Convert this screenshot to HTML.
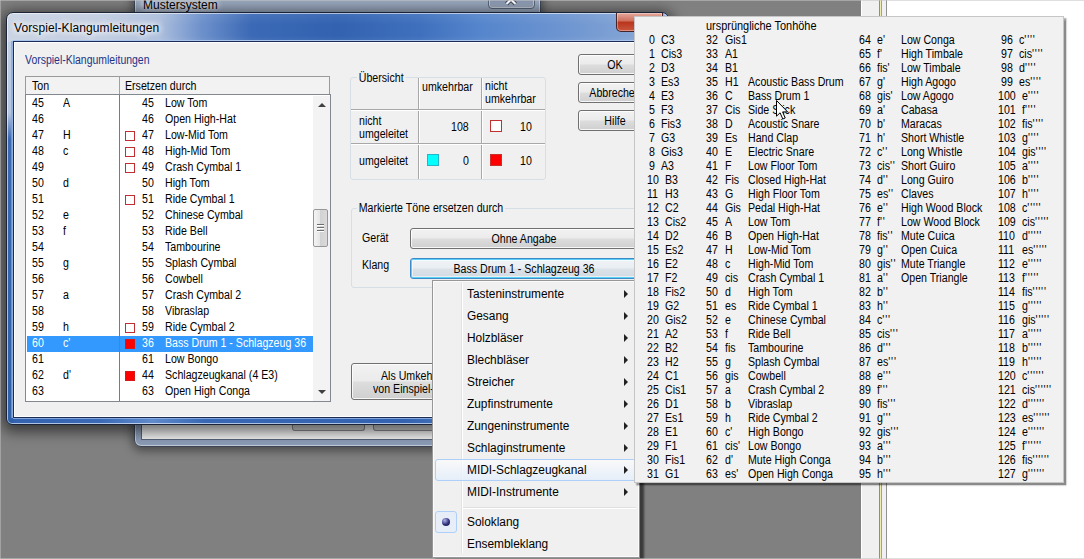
<!DOCTYPE html>
<html lang="de"><head><meta charset="utf-8"><title>Vorspiel-Klangumleitungen</title>
<style>
*{box-sizing:border-box;margin:0;padding:0}
html,body{width:1084px;height:559px;overflow:hidden}
body{background:#808080;font-family:"Liberation Sans",sans-serif;font-size:12px;color:#000;position:relative}
.abs{position:absolute}
i{font-style:normal;display:block;position:absolute}
/* ---------- background ---------- */
#topline{left:0;top:0;width:1084px;height:1px;background:rgba(196,196,196,.55)}
#botline{left:0;top:558px;width:1084px;height:1px;background:rgba(196,196,196,.55)}
#leftline{left:0;top:0;width:1px;height:559px;background:rgba(196,196,196,.5)}
#rwin{left:861px;top:0;width:223px;height:559px;background:#fff}
#rwin .a{left:0;top:0;width:18px;height:559px;background:#f0f0f0;border-left:1px solid #fff}
#rwin .b{left:18px;top:0;width:4px;height:559px;background:linear-gradient(90deg,#90907a 1px,#efefb2 1px,#eeeeb0 2.5px,#a4a486 2.5px,#a4a486 3.5px,#f0f0f4 3.5px)}
#rwin .c{left:22px;top:0;width:3px;height:559px;background:#f0f0f4}
#rwin .d{left:25px;top:0;width:1px;height:559px;background:#929292}
/* behind window */
#bwin{left:134px;top:-20px;width:407px;height:467px;border-radius:7px;border:1px solid #3c4656;
 background:linear-gradient(#9aa9bf,#8c9cb5);box-shadow:0 2px 10px 2px rgba(0,0,0,.42), inset 0 0 0 1px rgba(255,255,255,.45)}
#bwin .cl{left:6px;top:48px;width:393px;height:411px;background:#f0f0f0;border:1px solid #56627a}
#bwin .tt{left:8px;top:17px;font-size:12px;white-space:pre;text-shadow:0 0 6px #fff,0 0 6px #fff}
#bwin .xb{left:353px;top:10px;width:47px;height:18px;border:1px solid #5a6578;border-radius:0 0 4px 4px;background:linear-gradient(#b4bfd0,#98a6bc 50%,#8695ae 50%,#a0adc2);box-shadow:inset 0 0 0 1px rgba(255,255,255,.4)}
#bwin .bb{top:436px;height:14px;border:1px solid #8a8a8a;border-top:none;border-radius:0 0 3px 3px;background:linear-gradient(#dcdcdc,#cfcfcf)}
/* dialog */
#dlg{left:6px;top:12px;width:663px;height:413px;border-radius:7px 7px 6px 6px;border:1px solid #1a2436;
 background:
  linear-gradient(90deg,#c9d3e3 0,#c2cde1 14%,#adbfdd 23%,#6c90cb 29.5%,#3b69b5 37%,#3262b0 50%,#3f70bd 62.5%,#5585cc 71.5%,#6c94d0 83.5%,#86a6d6 96%,#8aa8d8 100%) 0 0/100% 29px no-repeat,
  linear-gradient(180deg,#c4cfe2 0,#b6c6df 100px,#3b69b4 126px,#2f5fa9 100%) 0 0/7px 100% no-repeat,
  linear-gradient(90deg,#3363b0 0,#3a6ab6 14%,#5f8acb 22%,#3868b4 30%,#3363b0 60%,#5a86c8 76%,#3a6ab6 88%,#3363b0 100%);
 box-shadow:0 3px 14px 4px rgba(0,0,0,.55), inset 0 0 0 1px rgba(255,255,255,.6)}
#dlg .sh{left:1px;top:1px;right:1px;height:27px;border-radius:6px 6px 0 0;background:linear-gradient(rgba(255,255,255,.07),rgba(255,255,255,0) 40%,rgba(255,255,255,0) 80%,rgba(255,255,255,.06))}
#dlg .ttl{left:7px;top:7px;letter-spacing:.1px;font-size:12px;line-height:16px;white-space:pre;text-shadow:0 0 7px #fff,0 0 7px #fff,0 0 9px #fff}
#dlg .close{left:609px;top:0px;width:47px;height:19px;border:1px solid #46242a;border-top:none;border-radius:0 0 5px 5px;background:linear-gradient(#e3a99d,#cf6d5a 45%,#b9341c 50%,#c9563c 100%);box-shadow:inset 0 0 0 1px rgba(255,255,255,.35)}
#cl{left:6px;top:28px;width:650px;height:377px;background:#f0f0f0;border:1px solid #1c2c52;box-shadow:inset 0 0 0 1px #fff,0 -1px 0 0 #a9c5ef,-1px 0 0 0 rgba(150,180,225,.8),-2px 0 0 0 rgba(130,165,215,.7),0 1px 0 0 rgba(150,185,235,.8)}
/* dialog text */
.dt{position:absolute;white-space:pre;font-size:12px;line-height:16px;transform:scaleX(.885);transform-origin:0 50%}
.dtc{position:absolute;white-space:pre;font-size:12px;line-height:14px;transform:scaleX(.885);transform-origin:50% 50%;text-align:center}
/* list */
#hdr{left:25px;top:76px;width:305px;height:18px;background:#f2f2f2;border:1px solid #9a9a9a;border-bottom:none}
#hdr .v{left:93px;top:0;width:1px;height:17px;background:#a0a0a0}
#list{left:25px;top:94px;width:306px;height:308px;background:#fff;border:1px solid #828790}
#list .div{left:93px;top:0;width:1px;height:306px;background:#5c7fb5}
.lr{position:absolute;left:1px;width:286px;height:16px}
.lr.sel{background:#3399ff;color:#fff}
.lr .c1{left:4.9px;top:-1.5px}.lr .c2{left:36.4px;top:-1.5px}.lr .c3{left:114.7px;top:-1.5px}.lr .c4{left:137.8px;top:-1.5px}
.sq{left:98px;top:3px;width:10px;height:10px}
.sq.e{border:1px solid #c03030;background:#fff}
.sq.f{border:1px solid #d81818;background:#ff0000}
#sb{left:287px;top:1px;width:17px;height:305px;background:#f3f3f3}
#sb .th{left:0px;top:113px;width:15px;height:38px;border:1px solid #979797;border-radius:2px;background:linear-gradient(90deg,#f4f4f4,#e4e4e4 50%,#d2d2d2 50%,#dadada)}
#sb .gr{left:4px;width:7px;height:2px;background:linear-gradient(#6e6e6e 1px,#fff 1px)}
.tri-u{width:0;height:0;border-left:4px solid transparent;border-right:4px solid transparent;border-bottom:4px solid #404040}
.tri-d{width:0;height:0;border-left:4px solid transparent;border-right:4px solid transparent;border-top:4px solid #404040}
/* group boxes */
.gb{position:absolute;border:1px solid #d5dfe5;border-radius:3px}
.gbl{position:absolute;background:#f0f0f0;padding:0 2px}
.eh{position:absolute;height:2px;border-top:1px solid #a8a8a8;border-bottom:1px solid #fff}
.ev{position:absolute;width:2px;border-left:1px solid #a8a8a8;border-right:1px solid #fff}
.csq{position:absolute;width:12px;height:12px}
/* buttons */
.btn{position:absolute;border:1px solid #707070;border-radius:3px;background:linear-gradient(#f2f2f2,#ebebeb 48%,#dddddd 52%,#cfcfcf);box-shadow:inset 0 0 0 1px rgba(255,255,255,.8)}
.btn.hot{border-color:#3c8ac8;background:linear-gradient(#f0f4f7,#e9eef2 48%,#dbe2e8 52%,#d2dae2);box-shadow:inset 0 0 0 1px #5ad2f6, inset 0 0 0 2px rgba(255,255,255,.55)}
/* menu */
#menu{left:432px;top:280px;width:208px;height:278px;background:#f0f0f0;border:1px solid #979797;border-right-color:#8a8a8a;box-shadow:inset 0 0 0 1px #fbfbfb,3px 3px 2px .5px rgba(0,0,0,.55)}
#menu .gut{left:28px;top:2px;width:2px;height:270px;border-left:1px solid #e2e3e3;border-right:1px solid #fff}
.mi{position:absolute;left:2px;width:202px;height:22px}
.mi.hl{margin-top:-1px;border:1px solid #aecff7;border-radius:3px;background:linear-gradient(rgba(255,255,255,.6),rgba(228,238,250,.9))}
.mt{position:absolute;left:32.4px;top:0;line-height:21px;font-size:12px;white-space:pre;transform:scaleX(.99);transform-origin:0 50%}
.mi.hl .mt{left:31.4px;top:0}
.arr{right:9px;top:6px;width:0;height:0;border-top:4px solid transparent;border-bottom:4px solid transparent;border-left:4px solid #222}
.mi.hl .arr{right:8px;top:6px}
.msep{position:absolute;left:30px;width:173px;height:2px;border-top:1px solid #e0e0e0;border-bottom:1px solid #fff}
.rb{left:0px;top:-1px;width:22px;height:22px;border:1px solid #aecff7;border-radius:3px;background:#e8eef8}
.rb b{display:block;position:absolute;left:6px;top:6px;width:8px;height:8px;border-radius:50%;background:radial-gradient(circle at 35% 30%,#b0b4e8,#30307a 55%,#10104a)}
/* popup */
#pop{left:634px;top:16px;width:430px;height:467px;background:#f1f1f1;border:1px solid #c6c6c6;box-shadow:2px 2px 1.5px .5px rgba(0,0,0,.46)}
.pt{position:absolute;white-space:pre;font-size:12px;line-height:14px;transform:scaleX(.885);transform-origin:0 50%}
.ap{letter-spacing:.9px}
</style></head><body>
<div id="rwin" class="abs"><i class="a"></i><i class="b"></i><i class="c"></i><i class="d"></i></div>
<div id="bwin" class="abs"><div class="cl abs"></div><span class="tt abs">Mustersystem</span><i class="xb"></i><svg class="abs" style="left:369px;top:13px" width="14" height="12" viewBox="0 0 14 12"><path d="M2.5 1 L11.5 10 M11.5 1 L2.5 10" stroke="#3a4456" stroke-width="4" fill="none"/><path d="M2.5 1 L11.5 10 M11.5 1 L2.5 10" stroke="#fff" stroke-width="2.2" fill="none"/></svg>
<i class="bb" style="left:157px;width:73px"></i><i class="bb" style="left:238px;width:120px"></i></div>

<div id="dlg" class="abs"><i class="sh"></i><span class="ttl abs">Vorspiel-Klangumleitungen</span><i class="close"></i>
<div id="cl" class="abs"></div></div>

<!-- dialog contents (page coords) -->
<span class="dt" style="left:24.5px;top:52px;color:#1e3287;transform:scaleX(.872)">Vorspiel-Klangumleitungen</span>
<div id="hdr" class="abs"><i class="v"></i><span class="dt" style="left:6px;top:1px">Ton</span><span class="dt" style="left:99px;top:1px">Ersetzen durch</span></div>
<div id="list" class="abs">
<div class="lr" style="top:1px"><span class="dt c1">45</span><span class="dt c2">A</span><span class="dt c3">45</span><span class="dt c4">Low Tom</span></div>
<div class="lr" style="top:17px"><span class="dt c1">46</span><span class="dt c2"></span><span class="dt c3">46</span><span class="dt c4">Open High-Hat</span></div>
<div class="lr" style="top:33px"><span class="dt c1">47</span><span class="dt c2">H</span><i class="sq e"></i><span class="dt c3">47</span><span class="dt c4">Low-Mid Tom</span></div>
<div class="lr" style="top:49px"><span class="dt c1">48</span><span class="dt c2">c</span><i class="sq e"></i><span class="dt c3">48</span><span class="dt c4">High-Mid Tom</span></div>
<div class="lr" style="top:65px"><span class="dt c1">49</span><span class="dt c2"></span><i class="sq e"></i><span class="dt c3">49</span><span class="dt c4">Crash Cymbal 1</span></div>
<div class="lr" style="top:81px"><span class="dt c1">50</span><span class="dt c2">d</span><span class="dt c3">50</span><span class="dt c4">High Tom</span></div>
<div class="lr" style="top:97px"><span class="dt c1">51</span><span class="dt c2"></span><i class="sq e"></i><span class="dt c3">51</span><span class="dt c4">Ride Cymbal 1</span></div>
<div class="lr" style="top:113px"><span class="dt c1">52</span><span class="dt c2">e</span><span class="dt c3">52</span><span class="dt c4">Chinese Cymbal</span></div>
<div class="lr" style="top:129px"><span class="dt c1">53</span><span class="dt c2">f</span><span class="dt c3">53</span><span class="dt c4">Ride Bell</span></div>
<div class="lr" style="top:145px"><span class="dt c1">54</span><span class="dt c2"></span><span class="dt c3">54</span><span class="dt c4">Tambourine</span></div>
<div class="lr" style="top:161px"><span class="dt c1">55</span><span class="dt c2">g</span><span class="dt c3">55</span><span class="dt c4">Splash Cymbal</span></div>
<div class="lr" style="top:177px"><span class="dt c1">56</span><span class="dt c2"></span><span class="dt c3">56</span><span class="dt c4">Cowbell</span></div>
<div class="lr" style="top:193px"><span class="dt c1">57</span><span class="dt c2">a</span><span class="dt c3">57</span><span class="dt c4">Crash Cymbal 2</span></div>
<div class="lr" style="top:209px"><span class="dt c1">58</span><span class="dt c2"></span><span class="dt c3">58</span><span class="dt c4">Vibraslap</span></div>
<div class="lr" style="top:225px"><span class="dt c1">59</span><span class="dt c2">h</span><i class="sq e"></i><span class="dt c3">59</span><span class="dt c4">Ride Cymbal 2</span></div>
<div class="lr sel" style="top:241px"><span class="dt c1">60</span><span class="dt c2">c'</span><i class="sq f"></i><span class="dt c3">36</span><span class="dt c4">Bass Drum 1 - Schlagzeug 36</span></div>
<div class="lr" style="top:257px"><span class="dt c1">61</span><span class="dt c2"></span><span class="dt c3">61</span><span class="dt c4">Low Bongo</span></div>
<div class="lr" style="top:273px"><span class="dt c1">62</span><span class="dt c2">d'</span><i class="sq f"></i><span class="dt c3">44</span><span class="dt c4">Schlagzeugkanal (4 E3)</span></div>
<div class="lr" style="top:289px"><span class="dt c1">63</span><span class="dt c2"></span><span class="dt c3">63</span><span class="dt c4">Open High Conga</span></div>
<i class="div"></i>
<div id="sb" class="abs"><i class="tri-u" style="left:5px;top:7px"></i><i class="th"></i><i class="gr" style="top:128px"></i><i class="gr" style="top:131px"></i><i class="gr" style="top:134px"></i><i class="tri-d" style="left:5px;top:294px"></i></div>
</div>

<!-- Übersicht -->
<div class="gb" style="left:350px;top:77px;width:196px;height:103px"></div>
<span class="gbl dt" style="left:357px;top:69.5px">Übersicht</span>
<i class="ev" style="left:418px;top:78px;height:101px"></i>
<i class="ev" style="left:481px;top:78px;height:101px"></i>
<i class="eh" style="left:351px;top:109px;width:194px"></i>
<i class="eh" style="left:351px;top:143px;width:194px"></i>
<span class="dt" style="left:422px;top:78.5px">umkehrbar</span>
<span class="dt" style="left:485px;top:80px;line-height:13px">nicht
umkehrbar</span>
<span class="dt" style="left:359px;top:115px;line-height:13px">nicht
umgeleitet</span>
<span class="dt" style="left:359px;top:153px">umgeleitet</span>
<span class="dt" style="left:451px;top:118.7px">108</span>
<span class="dt" style="left:520px;top:118.7px">10</span>
<span class="dt" style="left:463px;top:153px">0</span>
<span class="dt" style="left:520px;top:153px">10</span>
<i class="csq" style="left:490px;top:120px;border:1px solid #c03030;background:#fff"></i>
<i class="csq" style="left:427px;top:154px;border:1px solid #28b4c4;background:#00ffff"></i>
<i class="csq" style="left:490px;top:154px;border:1px solid #c83030;background:#ff0000"></i>

<!-- Markierte Töne -->
<div class="gb" style="left:351px;top:208px;width:320px;height:80px"></div>
<span class="gbl dt" style="left:357px;top:200px">Markierte Töne ersetzen durch</span>
<span class="dt" style="left:361.5px;top:230px">Gerät</span>
<span class="dt" style="left:361.5px;top:257px">Klang</span>
<div class="btn" style="left:410px;top:228px;width:228px;height:21px"><span class="dtc" style="left:0;top:3px;width:226px">Ohne Angabe</span></div>
<div class="btn hot" style="left:410px;top:258px;width:228px;height:21px"><span class="dtc" style="left:0;top:3px;width:226px">Bass Drum 1 - Schlagzeug 36</span></div>
<div class="btn" style="left:351px;top:363px;width:150px;height:37px"><span class="dt" style="left:28.5px;top:4px">Als Umkeh</span><span class="dt" style="left:20.5px;top:17px">von Einspiel-</span></div>
<div class="btn" style="left:578px;top:54px;width:74px;height:21px"><span class="dtc" style="left:0;top:3px;width:72px">OK</span></div>
<div class="btn" style="left:578px;top:82px;width:74px;height:21px"><span class="dtc" style="left:0;top:3px;width:72px">Abbrechen</span></div>
<div class="btn" style="left:578px;top:110px;width:74px;height:21px"><span class="dtc" style="left:0;top:3px;width:72px">Hilfe</span></div>

<div id="menu" class="abs"><i class="gut"></i>
<div class="mi" style="top:3px"><span class="mt">Tasteninstrumente</span><i class="arr"></i></div>
<div class="mi" style="top:25px"><span class="mt">Gesang</span><i class="arr"></i></div>
<div class="mi" style="top:47px"><span class="mt">Holzbläser</span><i class="arr"></i></div>
<div class="mi" style="top:69px"><span class="mt">Blechbläser</span><i class="arr"></i></div>
<div class="mi" style="top:91px"><span class="mt">Streicher</span><i class="arr"></i></div>
<div class="mi" style="top:113px"><span class="mt">Zupfinstrumente</span><i class="arr"></i></div>
<div class="mi" style="top:135px"><span class="mt">Zungeninstrumente</span><i class="arr"></i></div>
<div class="mi" style="top:157px"><span class="mt">Schlaginstrumente</span><i class="arr"></i></div>
<div class="mi hl" style="top:179px"><span class="mt">MIDI-Schlagzeugkanal</span><i class="arr"></i></div>
<div class="mi" style="top:201px"><span class="mt">MIDI-Instrumente</span><i class="arr"></i></div>
<div class="msep" style="top:226px"></div>
<div class="mi" style="top:231px"><i class="rb"><b></b></i><span class="mt">Soloklang</span></div>
<div class="mi" style="top:253px"><span class="mt">Ensembleklang</span></div>
</div>

<div id="pop" class="abs">
<span class="pt" style="transform:scaleX(.912);left:70.8px;top:2px">ursprüngliche Tonhöhe</span>
<span class="pt" style="left:13.9px;top:16px">0</span>
<span class="pt" style="left:26.3px;top:16px">C3</span>
<span class="pt" style="left:71.3px;top:16px">32</span>
<span class="pt" style="left:89.5px;top:16px">Gis1</span>
<span class="pt" style="left:224.3px;top:16px">64</span>
<span class="pt" style="left:241.6px;top:16px">e'</span>
<span class="pt" style="left:266.4px;top:16px">Low Conga</span>
<span class="pt" style="left:366.3px;top:16px">96</span>
<span class="pt" style="left:384.2px;top:16px">c<span class="ap">''''</span></span>
<span class="pt" style="left:13.9px;top:30px">1</span>
<span class="pt" style="left:26.3px;top:30px">Cis3</span>
<span class="pt" style="left:71.3px;top:30px">33</span>
<span class="pt" style="left:89.5px;top:30px">A1</span>
<span class="pt" style="left:224.3px;top:30px">65</span>
<span class="pt" style="left:241.6px;top:30px">f'</span>
<span class="pt" style="left:266.4px;top:30px">High Timbale</span>
<span class="pt" style="left:366.3px;top:30px">97</span>
<span class="pt" style="left:384.2px;top:30px">cis<span class="ap">''''</span></span>
<span class="pt" style="left:13.9px;top:44px">2</span>
<span class="pt" style="left:26.3px;top:44px">D3</span>
<span class="pt" style="left:71.3px;top:44px">34</span>
<span class="pt" style="left:89.5px;top:44px">B1</span>
<span class="pt" style="left:224.3px;top:44px">66</span>
<span class="pt" style="left:241.6px;top:44px">fis'</span>
<span class="pt" style="left:266.4px;top:44px">Low Timbale</span>
<span class="pt" style="left:366.3px;top:44px">98</span>
<span class="pt" style="left:384.2px;top:44px">d<span class="ap">''''</span></span>
<span class="pt" style="left:13.9px;top:58px">3</span>
<span class="pt" style="left:26.3px;top:58px">Es3</span>
<span class="pt" style="left:71.3px;top:58px">35</span>
<span class="pt" style="left:89.5px;top:58px">H1</span>
<span class="pt" style="left:113.4px;top:58px">Acoustic Bass Drum</span>
<span class="pt" style="left:224.3px;top:58px">67</span>
<span class="pt" style="left:241.6px;top:58px">g'</span>
<span class="pt" style="left:266.4px;top:58px">High Agogo</span>
<span class="pt" style="left:366.3px;top:58px">99</span>
<span class="pt" style="left:384.2px;top:58px">es<span class="ap">''''</span></span>
<span class="pt" style="left:13.9px;top:72px">4</span>
<span class="pt" style="left:26.3px;top:72px">E3</span>
<span class="pt" style="left:71.3px;top:72px">36</span>
<span class="pt" style="left:89.5px;top:72px">C</span>
<span class="pt" style="left:113.4px;top:72px">Bass Drum 1</span>
<span class="pt" style="left:224.3px;top:72px">68</span>
<span class="pt" style="left:241.6px;top:72px">gis'</span>
<span class="pt" style="left:266.4px;top:72px">Low Agogo</span>
<span class="pt" style="left:363.4px;top:72px">100</span>
<span class="pt" style="left:386.8px;top:72px">e<span class="ap">''''</span></span>
<span class="pt" style="left:13.9px;top:86px">5</span>
<span class="pt" style="left:26.3px;top:86px">F3</span>
<span class="pt" style="left:71.3px;top:86px">37</span>
<span class="pt" style="left:89.5px;top:86px">Cis</span>
<span class="pt" style="left:113.4px;top:86px">Side Stick</span>
<span class="pt" style="left:224.3px;top:86px">69</span>
<span class="pt" style="left:241.6px;top:86px">a'</span>
<span class="pt" style="left:266.4px;top:86px">Cabasa</span>
<span class="pt" style="left:363.4px;top:86px">101</span>
<span class="pt" style="left:386.8px;top:86px">f<span class="ap">''''</span></span>
<span class="pt" style="left:13.9px;top:100px">6</span>
<span class="pt" style="left:26.3px;top:100px">Fis3</span>
<span class="pt" style="left:71.3px;top:100px">38</span>
<span class="pt" style="left:89.5px;top:100px">D</span>
<span class="pt" style="left:113.4px;top:100px">Acoustic Snare</span>
<span class="pt" style="left:224.3px;top:100px">70</span>
<span class="pt" style="left:241.6px;top:100px">b'</span>
<span class="pt" style="left:266.4px;top:100px">Maracas</span>
<span class="pt" style="left:363.4px;top:100px">102</span>
<span class="pt" style="left:386.8px;top:100px">fis<span class="ap">''''</span></span>
<span class="pt" style="left:13.9px;top:114px">7</span>
<span class="pt" style="left:26.3px;top:114px">G3</span>
<span class="pt" style="left:71.3px;top:114px">39</span>
<span class="pt" style="left:89.5px;top:114px">Es</span>
<span class="pt" style="left:113.4px;top:114px">Hand Clap</span>
<span class="pt" style="left:224.3px;top:114px">71</span>
<span class="pt" style="left:241.6px;top:114px">h'</span>
<span class="pt" style="left:266.4px;top:114px">Short Whistle</span>
<span class="pt" style="left:363.4px;top:114px">103</span>
<span class="pt" style="left:386.8px;top:114px">g<span class="ap">''''</span></span>
<span class="pt" style="left:13.9px;top:128px">8</span>
<span class="pt" style="left:26.3px;top:128px">Gis3</span>
<span class="pt" style="left:71.3px;top:128px">40</span>
<span class="pt" style="left:89.5px;top:128px">E</span>
<span class="pt" style="left:113.4px;top:128px">Electric Snare</span>
<span class="pt" style="left:224.3px;top:128px">72</span>
<span class="pt" style="left:241.6px;top:128px">c<span class="ap">''</span></span>
<span class="pt" style="left:266.4px;top:128px">Long Whistle</span>
<span class="pt" style="left:363.4px;top:128px">104</span>
<span class="pt" style="left:386.8px;top:128px">gis<span class="ap">''''</span></span>
<span class="pt" style="left:13.9px;top:142px">9</span>
<span class="pt" style="left:26.3px;top:142px">A3</span>
<span class="pt" style="left:71.3px;top:142px">41</span>
<span class="pt" style="left:89.5px;top:142px">F</span>
<span class="pt" style="left:113.4px;top:142px">Low Floor Tom</span>
<span class="pt" style="left:224.3px;top:142px">73</span>
<span class="pt" style="left:241.6px;top:142px">cis<span class="ap">''</span></span>
<span class="pt" style="left:266.4px;top:142px">Short Guiro</span>
<span class="pt" style="left:363.4px;top:142px">105</span>
<span class="pt" style="left:386.8px;top:142px">a<span class="ap">''''</span></span>
<span class="pt" style="left:12.2px;top:156px">10</span>
<span class="pt" style="left:29.5px;top:156px">B3</span>
<span class="pt" style="left:71.3px;top:156px">42</span>
<span class="pt" style="left:89.5px;top:156px">Fis</span>
<span class="pt" style="left:113.4px;top:156px">Closed High-Hat</span>
<span class="pt" style="left:224.3px;top:156px">74</span>
<span class="pt" style="left:241.6px;top:156px">d<span class="ap">''</span></span>
<span class="pt" style="left:266.4px;top:156px">Long Guiro</span>
<span class="pt" style="left:363.4px;top:156px">106</span>
<span class="pt" style="left:386.8px;top:156px">b<span class="ap">''''</span></span>
<span class="pt" style="left:12.2px;top:170px">11</span>
<span class="pt" style="left:29.5px;top:170px">H3</span>
<span class="pt" style="left:71.3px;top:170px">43</span>
<span class="pt" style="left:89.5px;top:170px">G</span>
<span class="pt" style="left:113.4px;top:170px">High Floor Tom</span>
<span class="pt" style="left:224.3px;top:170px">75</span>
<span class="pt" style="left:241.6px;top:170px">es<span class="ap">''</span></span>
<span class="pt" style="left:266.4px;top:170px">Claves</span>
<span class="pt" style="left:363.4px;top:170px">107</span>
<span class="pt" style="left:386.8px;top:170px">h<span class="ap">''''</span></span>
<span class="pt" style="left:12.2px;top:184px">12</span>
<span class="pt" style="left:29.5px;top:184px">C2</span>
<span class="pt" style="left:71.3px;top:184px">44</span>
<span class="pt" style="left:89.5px;top:184px">Gis</span>
<span class="pt" style="left:113.4px;top:184px">Pedal High-Hat</span>
<span class="pt" style="left:224.3px;top:184px">76</span>
<span class="pt" style="left:241.6px;top:184px">e<span class="ap">''</span></span>
<span class="pt" style="left:266.4px;top:184px">High Wood Block</span>
<span class="pt" style="left:363.4px;top:184px">108</span>
<span class="pt" style="left:386.8px;top:184px">c<span class="ap">'''''</span></span>
<span class="pt" style="left:12.2px;top:198px">13</span>
<span class="pt" style="left:29.5px;top:198px">Cis2</span>
<span class="pt" style="left:71.3px;top:198px">45</span>
<span class="pt" style="left:89.5px;top:198px">A</span>
<span class="pt" style="left:113.4px;top:198px">Low Tom</span>
<span class="pt" style="left:224.3px;top:198px">77</span>
<span class="pt" style="left:241.6px;top:198px">f<span class="ap">''</span></span>
<span class="pt" style="left:266.4px;top:198px">Low Wood Block</span>
<span class="pt" style="left:363.4px;top:198px">109</span>
<span class="pt" style="left:386.8px;top:198px">cis<span class="ap">'''''</span></span>
<span class="pt" style="left:12.2px;top:212px">14</span>
<span class="pt" style="left:29.5px;top:212px">D2</span>
<span class="pt" style="left:71.3px;top:212px">46</span>
<span class="pt" style="left:89.5px;top:212px">B</span>
<span class="pt" style="left:113.4px;top:212px">Open High-Hat</span>
<span class="pt" style="left:224.3px;top:212px">78</span>
<span class="pt" style="left:241.6px;top:212px">fis<span class="ap">''</span></span>
<span class="pt" style="left:266.4px;top:212px">Mute Cuica</span>
<span class="pt" style="left:363.4px;top:212px">110</span>
<span class="pt" style="left:386.8px;top:212px">d<span class="ap">'''''</span></span>
<span class="pt" style="left:12.2px;top:226px">15</span>
<span class="pt" style="left:29.5px;top:226px">Es2</span>
<span class="pt" style="left:71.3px;top:226px">47</span>
<span class="pt" style="left:89.5px;top:226px">H</span>
<span class="pt" style="left:113.4px;top:226px">Low-Mid Tom</span>
<span class="pt" style="left:224.3px;top:226px">79</span>
<span class="pt" style="left:241.6px;top:226px">g<span class="ap">''</span></span>
<span class="pt" style="left:266.4px;top:226px">Open Cuica</span>
<span class="pt" style="left:363.4px;top:226px">111</span>
<span class="pt" style="left:386.8px;top:226px">es<span class="ap">'''''</span></span>
<span class="pt" style="left:12.2px;top:240px">16</span>
<span class="pt" style="left:29.5px;top:240px">E2</span>
<span class="pt" style="left:71.3px;top:240px">48</span>
<span class="pt" style="left:89.5px;top:240px">c</span>
<span class="pt" style="left:113.4px;top:240px">High-Mid Tom</span>
<span class="pt" style="left:224.3px;top:240px">80</span>
<span class="pt" style="left:241.6px;top:240px">gis<span class="ap">''</span></span>
<span class="pt" style="left:266.4px;top:240px">Mute Triangle</span>
<span class="pt" style="left:363.4px;top:240px">112</span>
<span class="pt" style="left:386.8px;top:240px">e<span class="ap">'''''</span></span>
<span class="pt" style="left:12.2px;top:254px">17</span>
<span class="pt" style="left:29.5px;top:254px">F2</span>
<span class="pt" style="left:71.3px;top:254px">49</span>
<span class="pt" style="left:89.5px;top:254px">cis</span>
<span class="pt" style="left:113.4px;top:254px">Crash Cymbal 1</span>
<span class="pt" style="left:224.3px;top:254px">81</span>
<span class="pt" style="left:241.6px;top:254px">a<span class="ap">''</span></span>
<span class="pt" style="left:266.4px;top:254px">Open Triangle</span>
<span class="pt" style="left:363.4px;top:254px">113</span>
<span class="pt" style="left:386.8px;top:254px">f<span class="ap">'''''</span></span>
<span class="pt" style="left:12.2px;top:268px">18</span>
<span class="pt" style="left:29.5px;top:268px">Fis2</span>
<span class="pt" style="left:71.3px;top:268px">50</span>
<span class="pt" style="left:89.5px;top:268px">d</span>
<span class="pt" style="left:113.4px;top:268px">High Tom</span>
<span class="pt" style="left:224.3px;top:268px">82</span>
<span class="pt" style="left:241.6px;top:268px">b<span class="ap">''</span></span>
<span class="pt" style="left:363.4px;top:268px">114</span>
<span class="pt" style="left:386.8px;top:268px">fis<span class="ap">'''''</span></span>
<span class="pt" style="left:12.2px;top:282px">19</span>
<span class="pt" style="left:29.5px;top:282px">G2</span>
<span class="pt" style="left:71.3px;top:282px">51</span>
<span class="pt" style="left:89.5px;top:282px">es</span>
<span class="pt" style="left:113.4px;top:282px">Ride Cymbal 1</span>
<span class="pt" style="left:224.3px;top:282px">83</span>
<span class="pt" style="left:241.6px;top:282px">h<span class="ap">''</span></span>
<span class="pt" style="left:363.4px;top:282px">115</span>
<span class="pt" style="left:386.8px;top:282px">g<span class="ap">'''''</span></span>
<span class="pt" style="left:12.2px;top:296px">20</span>
<span class="pt" style="left:29.5px;top:296px">Gis2</span>
<span class="pt" style="left:71.3px;top:296px">52</span>
<span class="pt" style="left:89.5px;top:296px">e</span>
<span class="pt" style="left:113.4px;top:296px">Chinese Cymbal</span>
<span class="pt" style="left:224.3px;top:296px">84</span>
<span class="pt" style="left:241.6px;top:296px">c<span class="ap">'''</span></span>
<span class="pt" style="left:363.4px;top:296px">116</span>
<span class="pt" style="left:386.8px;top:296px">gis<span class="ap">'''''</span></span>
<span class="pt" style="left:12.2px;top:310px">21</span>
<span class="pt" style="left:29.5px;top:310px">A2</span>
<span class="pt" style="left:71.3px;top:310px">53</span>
<span class="pt" style="left:89.5px;top:310px">f</span>
<span class="pt" style="left:113.4px;top:310px">Ride Bell</span>
<span class="pt" style="left:224.3px;top:310px">85</span>
<span class="pt" style="left:241.6px;top:310px">cis<span class="ap">'''</span></span>
<span class="pt" style="left:363.4px;top:310px">117</span>
<span class="pt" style="left:386.8px;top:310px">a<span class="ap">'''''</span></span>
<span class="pt" style="left:12.2px;top:324px">22</span>
<span class="pt" style="left:29.5px;top:324px">B2</span>
<span class="pt" style="left:71.3px;top:324px">54</span>
<span class="pt" style="left:89.5px;top:324px">fis</span>
<span class="pt" style="left:113.4px;top:324px">Tambourine</span>
<span class="pt" style="left:224.3px;top:324px">86</span>
<span class="pt" style="left:241.6px;top:324px">d<span class="ap">'''</span></span>
<span class="pt" style="left:363.4px;top:324px">118</span>
<span class="pt" style="left:386.8px;top:324px">b<span class="ap">'''''</span></span>
<span class="pt" style="left:12.2px;top:338px">23</span>
<span class="pt" style="left:29.5px;top:338px">H2</span>
<span class="pt" style="left:71.3px;top:338px">55</span>
<span class="pt" style="left:89.5px;top:338px">g</span>
<span class="pt" style="left:113.4px;top:338px">Splash Cymbal</span>
<span class="pt" style="left:224.3px;top:338px">87</span>
<span class="pt" style="left:241.6px;top:338px">es<span class="ap">'''</span></span>
<span class="pt" style="left:363.4px;top:338px">119</span>
<span class="pt" style="left:386.8px;top:338px">h<span class="ap">'''''</span></span>
<span class="pt" style="left:12.2px;top:352px">24</span>
<span class="pt" style="left:29.5px;top:352px">C1</span>
<span class="pt" style="left:71.3px;top:352px">56</span>
<span class="pt" style="left:89.5px;top:352px">gis</span>
<span class="pt" style="left:113.4px;top:352px">Cowbell</span>
<span class="pt" style="left:224.3px;top:352px">88</span>
<span class="pt" style="left:241.6px;top:352px">e<span class="ap">'''</span></span>
<span class="pt" style="left:363.4px;top:352px">120</span>
<span class="pt" style="left:386.8px;top:352px">c<span class="ap">''''''</span></span>
<span class="pt" style="left:12.2px;top:366px">25</span>
<span class="pt" style="left:29.5px;top:366px">Cis1</span>
<span class="pt" style="left:71.3px;top:366px">57</span>
<span class="pt" style="left:89.5px;top:366px">a</span>
<span class="pt" style="left:113.4px;top:366px">Crash Cymbal 2</span>
<span class="pt" style="left:224.3px;top:366px">89</span>
<span class="pt" style="left:241.6px;top:366px">f<span class="ap">'''</span></span>
<span class="pt" style="left:363.4px;top:366px">121</span>
<span class="pt" style="left:386.8px;top:366px">cis<span class="ap">''''''</span></span>
<span class="pt" style="left:12.2px;top:380px">26</span>
<span class="pt" style="left:29.5px;top:380px">D1</span>
<span class="pt" style="left:71.3px;top:380px">58</span>
<span class="pt" style="left:89.5px;top:380px">b</span>
<span class="pt" style="left:113.4px;top:380px">Vibraslap</span>
<span class="pt" style="left:224.3px;top:380px">90</span>
<span class="pt" style="left:241.6px;top:380px">fis<span class="ap">'''</span></span>
<span class="pt" style="left:363.4px;top:380px">122</span>
<span class="pt" style="left:386.8px;top:380px">d<span class="ap">''''''</span></span>
<span class="pt" style="left:12.2px;top:394px">27</span>
<span class="pt" style="left:29.5px;top:394px">Es1</span>
<span class="pt" style="left:71.3px;top:394px">59</span>
<span class="pt" style="left:89.5px;top:394px">h</span>
<span class="pt" style="left:113.4px;top:394px">Ride Cymbal 2</span>
<span class="pt" style="left:224.3px;top:394px">91</span>
<span class="pt" style="left:241.6px;top:394px">g<span class="ap">'''</span></span>
<span class="pt" style="left:363.4px;top:394px">123</span>
<span class="pt" style="left:386.8px;top:394px">es<span class="ap">''''''</span></span>
<span class="pt" style="left:12.2px;top:408px">28</span>
<span class="pt" style="left:29.5px;top:408px">E1</span>
<span class="pt" style="left:71.3px;top:408px">60</span>
<span class="pt" style="left:89.5px;top:408px">c'</span>
<span class="pt" style="left:113.4px;top:408px">High Bongo</span>
<span class="pt" style="left:224.3px;top:408px">92</span>
<span class="pt" style="left:241.6px;top:408px">gis<span class="ap">'''</span></span>
<span class="pt" style="left:363.4px;top:408px">124</span>
<span class="pt" style="left:386.8px;top:408px">e<span class="ap">''''''</span></span>
<span class="pt" style="left:12.2px;top:422px">29</span>
<span class="pt" style="left:29.5px;top:422px">F1</span>
<span class="pt" style="left:71.3px;top:422px">61</span>
<span class="pt" style="left:89.5px;top:422px">cis'</span>
<span class="pt" style="left:113.4px;top:422px">Low Bongo</span>
<span class="pt" style="left:224.3px;top:422px">93</span>
<span class="pt" style="left:241.6px;top:422px">a<span class="ap">'''</span></span>
<span class="pt" style="left:363.4px;top:422px">125</span>
<span class="pt" style="left:386.8px;top:422px">f<span class="ap">''''''</span></span>
<span class="pt" style="left:12.2px;top:436px">30</span>
<span class="pt" style="left:29.5px;top:436px">Fis1</span>
<span class="pt" style="left:71.3px;top:436px">62</span>
<span class="pt" style="left:89.5px;top:436px">d'</span>
<span class="pt" style="left:113.4px;top:436px">Mute High Conga</span>
<span class="pt" style="left:224.3px;top:436px">94</span>
<span class="pt" style="left:241.6px;top:436px">b<span class="ap">'''</span></span>
<span class="pt" style="left:363.4px;top:436px">126</span>
<span class="pt" style="left:386.8px;top:436px">fis<span class="ap">''''''</span></span>
<span class="pt" style="left:12.2px;top:450px">31</span>
<span class="pt" style="left:29.5px;top:450px">G1</span>
<span class="pt" style="left:71.3px;top:450px">63</span>
<span class="pt" style="left:89.5px;top:450px">es'</span>
<span class="pt" style="left:113.4px;top:450px">Open High Conga</span>
<span class="pt" style="left:224.3px;top:450px">95</span>
<span class="pt" style="left:241.6px;top:450px">h<span class="ap">'''</span></span>
<span class="pt" style="left:363.4px;top:450px">127</span>
<span class="pt" style="left:386.8px;top:450px">g<span class="ap">''''''</span></span>
</div>
<svg class="abs" style="left:775.5px;top:99.5px" width="14" height="21" viewBox="0 0 14 21"><path d="M0.5 0.5 L0.5 16.2 L4.1 12.8 L6.8 19 L9.2 18 L6.6 11.9 L11.6 11.9 Z" fill="#fff" stroke="#000" stroke-width="1"/></svg>
<i id="topline"></i><i id="leftline"></i><i id="botline"></i>
</body></html>
